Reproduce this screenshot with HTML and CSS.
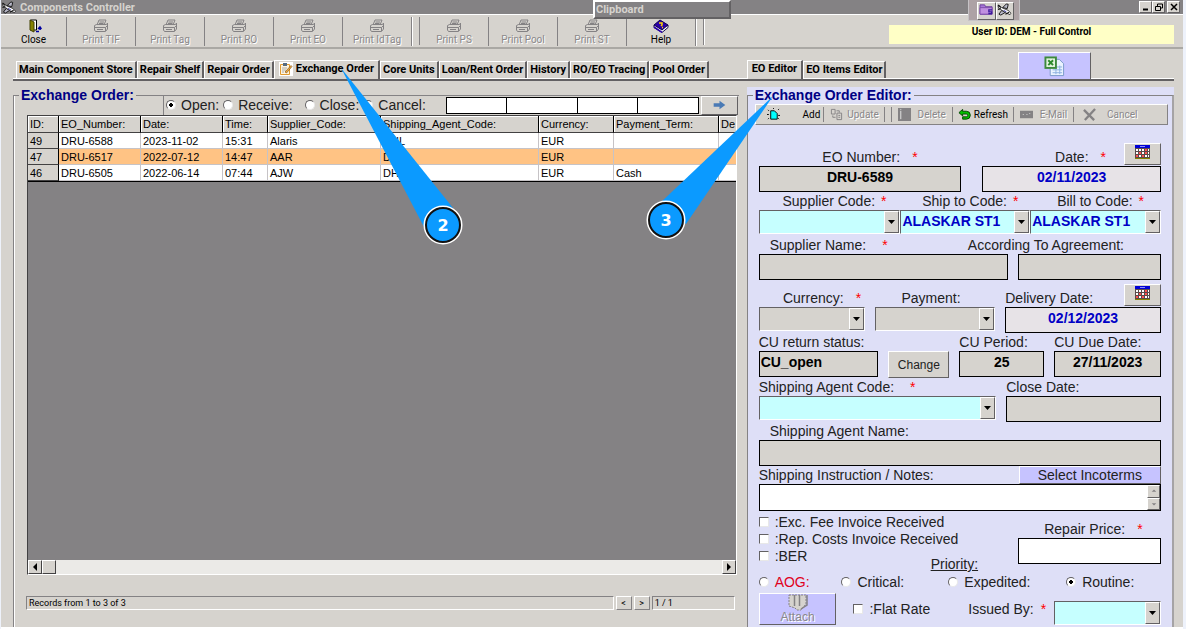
FILE: index.html
```html
<!DOCTYPE html>
<html lang="en">
<head>
  <meta charset="UTF-8" />
  <meta name="viewport" content="width=device-width, initial-scale=1.0"/>
  <title>Components Controller</title>
  <link rel="stylesheet" href="styles.css">
</head>
<body>

<!-- Shared icons -->
<svg class="sprite" aria-hidden="true">
  <symbol id="printer" viewBox="0 0 16 14">
    <path d="M4 6 L6 1 H13 L11 6 M6.500 3 H11 M6 4.500 H10.500 M1.500 6.500 L3.500 5.500 H13.500 L14.500 4 V10 L12.500 12.500 H2.500 L1.500 11 Z M2 8.500 H12.500 L14.500 6.500 M4 10.500 H10 M12.500 8.500 V12" fill="none" stroke="#848284"/>
  </symbol>
  <symbol id="plane" viewBox="0 0 16 14">
    <path d="M6 5 L10 1 L12 1.500 L11 6 Z M5 8 L2 12 L4 13 L9 10 Z" fill="#b8b8c8" stroke="#111"/>
    <path d="M1 3 L3 3 L5 5 L12 8 L15 11 L14 12.500 L10 11 L4 7 L2 6 Z" fill="#fff" stroke="#111" stroke-width=".8"/>
    <path d="M1 2 L4 5 M1 7 L4 6 M9 12 L13 10" fill="none" stroke="#111" stroke-width="1.200"/>
    <path d="M7 8 L10 9.500" stroke="#3030a0"/>
  </symbol>
  <symbol id="calendar" viewBox="0 0 15 15">
    <rect x="0" y="0" width="15" height="3" fill="#0000d6"/>
    <rect x="5" y="1" width="5" height="1" fill="#8a8aff"/>
    <rect x="0" y="3" width="15" height="11" fill="#5a4a4a"/>
    <path d="M1 5 H14 M1 8 H14 M1 11 H14" stroke="#fff" stroke-width="2" stroke-dasharray="2 1"/>
    <path d="M10 5 H12 M4 8 H6 M10 8 H12 M1 11 H3 M7 11 H9" stroke="#ff5050" stroke-width="2"/>
    <rect x="0" y="13" width="15" height="1" fill="#848200"/>
  </symbol>
</svg>

<div class="app">
  <!-- Title bar -->
  <header class="titlebar">
    <svg class="plane"><use href="#plane"/></svg>
    <h1>Components Controller</h1>
    <div class="winbtns">
      <button aria-label="Minimize"><svg viewBox="0 0 8 8"><path d="M1 6.500 H6" stroke="#000" stroke-width="2"/></svg></button>
      <button aria-label="Restore"><svg viewBox="0 0 8 8"><path d="M2.500 3 V1 H7.500 V5 H6 M0.500 3.500 H5.500 V7.500 H0.500 Z" fill="none" stroke="#000"/></svg></button>
      <button class="winclose" aria-label="Close window"><svg viewBox="0 0 8 8"><path d="M1 1 L7 7 M7 1 L1 7" stroke="#000" stroke-width="1.500"/></svg></button>
    </div>
  </header>

  <!-- Main toolbar -->
  <nav class="toolbar">
    <button>
      <svg viewBox="0 0 16 14"><path d="M4.500 1 H10.500 V11 H4.500 Z" fill="#fff" stroke="#000"/><path d="M4 1 L8 3 V13 L4 11 Z" fill="#848200" stroke="#424100"/><path d="M10 12.500 H13 M14 8.500 V11 M12 10 L14 8 L15.500 10" fill="none" stroke="#0000a0" stroke-width="1.500"/></svg>
      Close</button>
    <button disabled><svg><use href="#printer"/></svg>Print TIF</button>
    <button disabled><svg><use href="#printer"/></svg>Print Tag</button>
    <button disabled><svg><use href="#printer"/></svg>Print RO</button>
    <button disabled><svg><use href="#printer"/></svg>Print EO</button>
    <button disabled><svg><use href="#printer"/></svg>Print IdTag</button>
    <span class="divider"></span>
    <button disabled><svg><use href="#printer"/></svg>Print PS</button>
    <button disabled><svg><use href="#printer"/></svg>Print Pool</button>
    <button disabled><svg><use href="#printer"/></svg>Print ST</button>
    <button>
      <svg viewBox="0 0 16 14"><path d="M1 6 L7 1 L15 6 L9 11 Z" fill="#2a00a8" stroke="#100050"/><path d="M1 6 V8.500 L9 13.500 L15 8.500 V6 L9 11 Z" fill="#fff" stroke="#100050"/><path d="M1 8 L9 13.300" stroke="#2a00a8" stroke-width="1.500"/><path d="M6 4 L9 4 L9 6 L8 7 M9 8.500 H10" fill="none" stroke="#ffd800" stroke-width="1.500"/></svg>
      Help</button>
    <span class="divider"></span>
    <p class="user">User ID: DEM - Full Control</p>
  </nav>

  <main class="columns">
    <!-- Order list -->
    <section class="col">
      <div class="tabs">
        <button>Main Component Store</button>
        <button>Repair Shelf</button>
        <button>Repair Order</button>
        <button class="active">
          <svg viewBox="0 0 14 14"><rect width="14" height="14" fill="#fff"/><path d="M1.500 2.500 H10.500 V12.500 H1.500 Z" fill="#fff4dc" stroke="#e09a30"/><rect x="4" y="1" width="4" height="3" fill="#556a80"/><path d="M3 6 H8 M3 8 H7 M3 10 H5" stroke="#aaa"/><path d="M6 10 L12 3.500 L13 4.500 L7.500 11 Z" fill="#f0b040" stroke="#704010" stroke-width=".6"/></svg>
          Exchange Order</button>
        <button>Core Units</button>
        <button>Loan/Rent Order</button>
        <button>History</button>
        <button>RO/EO Tracing</button>
        <button>Pool Order</button>
      </div>

      <fieldset class="group orders">
        <legend>Exchange Order:</legend>

        <div class="filter">
          <label><input type="radio" name="state" checked /> Open:</label>
          <label><input type="radio" name="state" /> Receive:</label>
          <label><input type="radio" name="state" /> Close:</label>
          <label><input type="radio" name="state" /> Cancel:</label>
          <div class="search">
            <input type="text" aria-label="EO number" />
            <input type="text" class="wide" aria-label="Date" />
            <input type="text" aria-label="Supplier" />
            <input type="text" aria-label="Agent" />
          </div>
          <button class="go" aria-label="Search"><svg viewBox="0 0 16 12"><path d="M1 4 H8 V1 L15 6 L8 11 V8 H1 Z" fill="#4a7ab5"/></svg></button>
        </div>

        <div class="grid">
          <div class="rows">
            <table>
              <colgroup>
                <col class="c-id"><col class="c-num"><col class="c-num"><col class="c-time"><col class="c-sup"><col class="c-ship"><col class="c-cur"><col class="c-pay"><col>
              </colgroup>
              <thead>
                <tr><th>ID:</th><th>EO_Number:</th><th>Date:</th><th>Time:</th><th>Supplier_Code:</th><th>Shipping_Agent_Code:</th><th>Currency:</th><th>Payment_Term:</th><th>De</th></tr>
              </thead>
              <tbody>
                <tr><th>49</th><td>DRU-6588</td><td>2023-11-02</td><td>15:31</td><td>Alaris</td><td>DHL</td><td>EUR</td><td></td><td></td></tr>
                <tr class="selected"><th>47</th><td>DRU-6517</td><td>2022-07-12</td><td>14:47</td><td>AAR</td><td>DHL</td><td>EUR</td><td></td><td></td></tr>
                <tr><th>46</th><td>DRU-6505</td><td>2022-06-14</td><td>07:44</td><td>AJW</td><td>DHL</td><td>EUR</td><td>Cash</td><td></td></tr>
              </tbody>
            </table>
          </div>
          <div class="scroll">
            <button aria-label="Scroll left"><svg viewBox="0 0 8 8"><path d="M6 0 V8 L2 4 Z"/></svg></button>
            <span class="thumb"></span>
            <button aria-label="Scroll right"><svg viewBox="0 0 8 8"><path d="M2 0 V8 L6 4 Z"/></svg></button>
          </div>
        </div>

        <div class="pager">
          <span class="records">Records from 1 to 3 of 3</span>
          <button>&lt;</button>
          <button>&gt;</button>
          <span class="page">1 / 1</span>
        </div>
      </fieldset>
    </section>

    <!-- Order editor -->
    <section class="col">
      <div class="tabs">
        <button class="active">EO Editor</button>
        <button>EO Items Editor</button>
        <button class="excel" aria-label="Export to Excel">
          <svg viewBox="0 0 22 22"><path d="M6.500 3.500 H16 L20.500 8 V20.500 H6.500 Z" fill="#eaf3ff" stroke="#7a9ac8"/><path d="M9 11.500 H19 M9 14.500 H19 M9 17.500 H19 M12.500 10 V19 M16.500 10 V19" stroke="#8ab0e0"/><rect x="1.500" y="1.500" width="11" height="11" fill="#e4f4e0" stroke="#3d8a3d" stroke-width="2"/><path d="M4.500 4.500 L9.500 9.500 M9.500 4.500 L4.500 9.500" stroke="#2d8a2d" stroke-width="2"/></svg>
        </button>
      </div>

      <div class="editor">
        <fieldset class="group">
          <legend>Exchange Order Editor:</legend>

          <div class="actions">
            <button><svg viewBox="0 0 14 14"><path d="M4 3 H8 L11 6 V12 H4 Z" fill="#00ffff" stroke="#000"/><path d="M1 2 L2 3 M0 7 H2 M1 12 L2 11 M7 0 V1 M12 2 L13 1 M12 8 H14 M12 11 L13 12" stroke="#000"/></svg><span>Add</span></button>
            <button disabled><svg viewBox="0 0 14 14"><path d="M1.500 1.500 H5.500 V6.500 H1.500 Z M7.500 5.500 H12.500 V12.500 H7.500 Z M7 3 H10 M10 3 V5 M3 8 V10 H6 M9 8 H11 M9 10 H11" fill="none" stroke="#848284"/></svg><span>Update</span></button>
            <i></i>
            <button disabled><svg viewBox="0 0 14 14"><rect width="14" height="14" fill="#848284"/><path d="M3 3 V12 M3 1 V2" stroke="#e8e8e8"/></svg><span>Delete</span></button>
            <button><svg viewBox="0 0 14 14"><path d="M1 5 L5 1.500 V3.500 H9 A4 4 0 0 1 9 12 H5 V9.500 H9 A1.500 1.500 0 0 0 9 6.500 H5 V8.500 Z" fill="#00c000" stroke="#004000"/></svg><span>Refresh</span></button>
            <button disabled><svg viewBox="0 0 14 14"><rect y="3" width="14" height="8" fill="#848284"/><path d="M3 7 H4 M7 7 H8 M10 6 H11" stroke="#ddd"/></svg><span>E-Mail</span></button>
            <button disabled><svg viewBox="0 0 14 14"><path d="M1 2 L12 13 M13 1 L2 13" stroke="#848284" stroke-width="2.500"/></svg><span>Cancel</span></button>
          </div>

          <form class="form">
            <div class="line r-number">
              <div class="cell">
                <label class="mid" for="eoNumber">EO Number: <b>*</b></label>
                <input class="locked center" type="text" id="eoNumber" value="DRU-6589" readonly />
              </div>
              <div class="cell">
                <div class="withcal">
                  <label for="date">Date: <b>*</b></label>
                  <button type="button" class="cal" aria-label="Pick date"><svg><use href="#calendar"/></svg></button>
                </div>
                <input class="date" type="text" id="date" value="02/11/2023" />
              </div>
            </div>

            <div class="line r-codes">
              <div class="cell">
                <label class="mid tight" for="supplier">Supplier Code: <b>*</b></label>
                <div class="combo cyan"><select id="supplier"><option></option></select></div>
              </div>
              <div class="cell">
                <label class="mid tight" for="shipTo">Ship to Code: <b>*</b></label>
                <div class="combo cyan"><select id="shipTo"><option>ALASKAR ST1</option></select></div>
              </div>
              <div class="cell">
                <label class="mid tight" for="billTo">Bill to Code: <b>*</b></label>
                <div class="combo cyan"><select id="billTo"><option>ALASKAR ST1</option></select></div>
              </div>
            </div>

            <div class="line r-name">
              <div class="cell">
                <label class="inset" for="supplierName">Supplier Name: <b>*</b></label>
                <input class="locked" type="text" id="supplierName" readonly />
              </div>
              <div class="cell">
                <label class="end" for="agreement">According To Agreement:</label>
                <input class="locked" type="text" id="agreement" readonly />
              </div>
            </div>

            <div class="line r-money">
              <div class="cell">
                <label class="mid" for="currency">Currency: <b>*</b></label>
                <div class="combo"><select id="currency"><option></option></select></div>
              </div>
              <div class="cell">
                <label class="pay" for="payment">Payment:</label>
                <div class="combo"><select id="payment"><option></option></select></div>
              </div>
              <div class="cell">
                <div class="withcal left">
                  <label for="delivery">Delivery Date:</label>
                  <button type="button" class="cal" aria-label="Pick delivery date"><svg><use href="#calendar"/></svg></button>
                </div>
                <input class="date" type="text" id="delivery" value="02/12/2023" />
              </div>
            </div>

            <div class="line r-return">
              <div class="cell">
                <label for="cuStatus">CU return status:</label>
                <input class="locked" type="text" id="cuStatus" value="CU_open" readonly />
              </div>
              <button type="button" class="change">Change</button>
              <div class="cell">
                <label for="cuPeriod">CU Period:</label>
                <input class="locked center" type="text" id="cuPeriod" value="25" readonly />
              </div>
              <div class="cell">
                <label for="cuDue">CU Due Date:</label>
                <input class="locked center" type="text" id="cuDue" value="27/11/2023" readonly />
              </div>
            </div>

            <div class="line r-agent">
              <div class="cell">
                <label for="agentCode">Shipping Agent Code: <b>*</b></label>
                <div class="combo cyan"><select id="agentCode"><option></option></select></div>
              </div>
              <div class="cell">
                <label for="closeDate">Close Date:</label>
                <input class="locked" type="text" id="closeDate" readonly />
              </div>
            </div>

            <div class="cell">
              <label class="inset" for="agentName">Shipping Agent Name:</label>
              <input class="locked" type="text" id="agentName" readonly />
            </div>

            <div class="cell">
              <div class="notehead">
                <label for="notes">Shipping Instruction / Notes:</label>
                <button type="button" class="lilac">Select Incoterms</button>
              </div>
              <div class="notes">
                <textarea id="notes"></textarea>
                <div class="updown">
                  <button type="button" aria-label="Up"><svg viewBox="0 0 8 8"><path d="M1 5 H7 L4 2 Z"/></svg></button>
                  <button type="button" aria-label="Down"><svg viewBox="0 0 8 8"><path d="M1 3 H7 L4 6 Z"/></svg></button>
                </div>
              </div>
            </div>

            <div class="line r-price">
              <div class="checks">
                <label><input type="checkbox" /> :Exc. Fee Invoice Received</label>
                <label><input type="checkbox" /> :Rep. Costs Invoice Received</label>
                <label><input type="checkbox" /> :BER</label>
              </div>
              <div class="cell">
                <label class="price" for="price">Repair Price: <b>*</b></label>
                <input type="text" id="price" />
              </div>
            </div>

            <div class="priority">
              <span class="caption">Priority:</span>
              <div class="options">
                <label class="aog"><input type="radio" name="priority" /> AOG:</label>
                <label><input type="radio" name="priority" /> Critical:</label>
                <label><input type="radio" name="priority" /> Expedited:</label>
                <label><input type="radio" name="priority" checked /> Routine:</label>
              </div>
            </div>

            <div class="bottom">
              <button type="button" class="lilac attach" disabled>
                <svg viewBox="0 0 22 17"><path d="M2 1 H19 V10 L14 16 H10 L8 14 L2 12 Z" fill="#d6d3ce" stroke="#848284" stroke-dasharray="2 1"/><path d="M7.500 1 V12 M12.500 1 V12 M20 1 V11 L14 15" fill="none" stroke="#848284" stroke-width="1.500"/></svg>
                Attach</button>
              <label class="flat"><input type="checkbox" /> :Flat Rate</label>
              <label class="issued" for="issuedBy">Issued By: <b>*</b></label>
              <div class="combo cyan"><select id="issuedBy"><option></option></select></div>
            </div>
          </form>
        </fieldset>
      </div>
    </section>
  </main>

  <!-- Floating bars over the title bar -->
  <div class="clipboard">Clipboard</div>
  <div class="tray">
    <button aria-label="Folder"><svg viewBox="0 0 16 14"><path d="M1 2 H6 L7 4 H14 V12 H1 Z" fill="#a878d8" stroke="#6a3a9a"/><path d="M1 5 H14 V12 H1 Z" fill="#c090e0" stroke="#7a4aaa"/><path d="M14 7.500 H10.500 V9.500 H13.500 V11.500 H10" fill="none" stroke="#3a1a9a" stroke-width="1.300"/></svg></button>
    <button aria-label="Plane"><svg><use href="#plane"/></svg></button>
  </div>

  <!-- Step callouts -->
  <svg class="callouts" viewBox="0 0 800 260">
    <polygon points="341,68 424,227 453,208"/>
    <polygon points="773,96 658,205 686,224"/>
    <g class="pin"><circle class="halo" cx="443" cy="225" r="18"/><circle cx="443" cy="225" r="17"/><text x="443" y="231">2</text></g>
    <g class="pin"><circle class="halo" cx="666" cy="220" r="18"/><circle cx="666" cy="220" r="17"/><text x="666" y="226">3</text></g>
  </svg>
</div>

</body>
</html>
```

FILE: styles.css
```css
* {
  box-sizing: border-box;
}
body {
  margin: 0;
  background: #eef2fb;
  font-family: "Liberation Sans", Arial, sans-serif;
  font-size: 14px;
  color: #222;
}
h1, p {
  margin: 0;
}
button, input, select, textarea {
  font: inherit;
  color: inherit;
  margin: 0;
  padding: 0;
  border-radius: 0;
}
button {
  background: #d6d3ce;
  border: 1px solid;
  border-color: #fff #636163 #636163 #fff;
}
.sprite {
  display: none;
}
.app {
  position: relative;
  display: flex;
  flex-direction: column;
  height: 100vh;
  margin: 0 3px 0 1px;
  background: #d6d3ce;
  border-bottom: 2px solid #fff;
  overflow: hidden;
}

/* title bar */
.titlebar {
  display: flex;
  align-items: center;
  flex: none;
  height: 15px;
  padding-right: 3px;
  background: #848284;
  border-bottom: 1px solid #fff;
}
.titlebar h1 {
  flex: 1;
  font: bold 11px Roboto, sans-serif;
  color: #d6d3ce;
}
.plane {
  width: 16px;
  height: 13px;
  margin-right: 3px;
}
.winbtns {
  display: flex;
}
.winbtns button {
  display: flex;
  align-items: center;
  justify-content: center;
  width: 13px;
  height: 12px;
}
.winbtns svg {
  width: 8px;
  height: 8px;
}
.winbtns .winclose {
  margin-left: 2px;
}

/* main toolbar */
.toolbar {
  display: flex;
  flex: none;
  height: 34px;
  padding: 2px 9px 2px 0;
  border-bottom: 2px solid #aaa8a4;
}
.toolbar button {
  display: flex;
  flex-direction: column;
  align-items: center;
  width: 69px;
  height: 29px;
  padding-top: 2px;
  border: 0;
  border-right: 1px solid #848284;
  box-shadow: 1px 0 #fff;
  font: 10px/13px Roboto, sans-serif;
  color: #000;
}
.toolbar button:first-child {
  width: 66px;
}
.toolbar svg {
  width: 16px;
  height: 14px;
}
.toolbar button:disabled, button:disabled {
  color: #8a888a;
  text-shadow: 1px 1px #fff;
}
.divider {
  width: 8px;
  border-right: 1px solid #848284;
  box-shadow: 1px 0 #fff;
}
.toolbar .user {
  width: 285px;
  height: 19px;
  margin: 8px 0 0 auto;
  background: #ffffc6;
  font: bold 10px/13px Roboto, sans-serif;
  color: #000;
  text-align: center;
}

/* columns and tabs */
.columns {
  display: grid;
  grid-template-columns: minmax(0, 733fr) minmax(0, 427fr);
  flex: 1;
  min-height: 0;
  padding: 3px 9px 0 12px;
}
.col {
  display: flex;
  flex-direction: column;
  min-height: 0;
}
.tabs {
  display: flex;
  align-items: flex-end;
  flex: none;
  height: 29px;
  padding-left: 3px;
  border-bottom: 2px solid #636163;
  box-shadow: inset 0 -1px #fff;
}
.tabs button {
  display: flex;
  align-items: center;
  justify-content: center;
  height: 17px;
  margin-bottom: 1px;
  padding: 0 2px;
  border-bottom: 0;
  border-right-width: 2px;
  font: bold 11px/14px Roboto, sans-serif;
  color: #000;
  white-space: nowrap;
}
.tabs .active {
  height: 19px;
  margin-bottom: 0;
  padding: 0 4px 2px;
}
.tabs .active svg {
  width: 14px;
  height: 14px;
  margin-right: 3px;
}
.editor {
  flex: 1;
  min-height: 0;
  margin-top: 6px;
  background: #dedff7;
}
.col:last-child .tabs {
  padding-left: 0;
}
.tabs .excel {
  width: 73px;
  height: 27px;
  margin: 0 83px 0 auto;
  background: #c6c3ff;
  border-right-width: 1px;
}
.excel svg {
  width: 21px;
  height: 21px;
}

/* group boxes */
.group {
  min-width: 0;
  margin: 0;
  padding: 0;
  border: 1px solid #848284;
  border-bottom: 0;
}
.group legend {
  margin-left: 5px;
  padding: 0 2px;
  font-weight: bold;
  font-size: 14px;
  line-height: 16px;
  color: #000084;
}
.orders {
  display: flex;
  flex-direction: column;
  flex: 1;
  min-height: 0;
  margin: 6px 8px 0 0;
  border-right: 0;
  box-shadow: inset 1px 0 #fff;
}
.editor .group {
  height: 100%;
  border-right: 2px solid #a5a3a5;
}

/* filter */
.filter {
  display: flex;
  align-items: center;
  height: 20px;
  margin: -8px 1px 0 149px;
  padding-left: 2px;
  border-left: 1px solid #848284;
}
.filter label {
  display: flex;
  align-items: center;
  margin-right: 4px;
}
.filter label:nth-child(2) {
  margin-right: 12px;
}
input[type="radio"], input[type="checkbox"] {
  appearance: none;
  flex: none;
  width: 10px;
  height: 10px;
  background: #fff;
  border: 1px solid;
  border-color: #636163 #e8e8e8 #e8e8e8 #636163;
}
input[type="radio"] {
  margin-right: 6px;
  border-radius: 50%;
}
.filter input[type="radio"] {
  margin-right: 5px;
}
input[type="radio"]:checked {
  background: radial-gradient(circle, #000 2px, #fff 2px);
}
input[type="checkbox"] {
  margin-right: 6px;
}
.search {
  display: flex;
  flex: 1;
  min-width: 0;
  height: 17px;
  margin-left: 16px;
}
.search input {
  flex: 6;
  min-width: 0;
  width: 0;
  border: 1px solid #000;
  border-width: 1px 1px 1px 0;
}
.search input:first-child {
  border-left-width: 1px;
}
.search .wide {
  flex: 7;
}
.go {
  width: 37px;
  height: 19px;
  margin-left: 2px;
}
.go svg {
  width: 15px;
  height: 10px;
}

/* order table */
.grid {
  display: flex;
  flex-direction: column;
  flex: 1;
  min-height: 0;
  margin: 0 2px 0 13px;
  background: #848284;
  border: 1px solid;
  border-color: #424142 #fff #fff #424142;
}
.rows {
  flex: 1;
}
table {
  width: 100%;
  table-layout: fixed;
  border-collapse: separate;
  border-spacing: 0;
  border-bottom: 1px solid #000;
  background: #fff;
  font-size: 11px;
  line-height: 14px;
  color: #000;
}
th, td {
  height: 16px;
  padding: 0 2px;
  border-right: 1px solid #c6c3c6;
  border-bottom: 1px solid #c6c3c6;
  font-weight: normal;
  text-align: left;
  white-space: nowrap;
}
th {
  background: #d6d3ce;
  border-right-color: #000;
  border-bottom-color: #424142;
}
thead th {
  height: 17px;
  box-shadow: inset 1px 1px #fff;
}
th:last-child, td:last-child {
  padding-right: 0;
  border-right: 0;
}
.selected td {
  background: #ffc384;
}
.c-id { width: 31px; }
.c-num { width: 82px; }
.c-time { width: 45px; }
.c-sup { width: 113px; }
.c-ship { width: 158px; }
.c-cur { width: 75px; }
.c-pay { width: 105px; }

.scroll {
  display: flex;
  flex: none;
  height: 14px;
  background: #ebeae7;
}
.scroll button, .thumb {
  width: 14px;
  background: #d6d3ce;
  border: 1px solid;
  border-color: #fff #424142 #424142 #fff;
}
.scroll button {
  display: flex;
  align-items: center;
  justify-content: center;
}
.scroll svg {
  width: 8px;
  height: 8px;
}
.scroll button:last-child {
  margin-left: auto;
}

/* pager */
.pager {
  display: flex;
  gap: 2px;
  height: 14px;
  margin: 21px 4px 17px 12px;
  font: 9px/12px Roboto, sans-serif;
  color: #000;
}
.records, .page {
  padding-left: 2px;
  border: 1px solid;
  border-color: #848284 #fff #fff #848284;
}
.records {
  flex: 1;
}
.page {
  width: 83px;
}
.pager button {
  width: 16px;
  line-height: 10px;
  border-color: #fff #848284 #848284 #fff;
}

/* editor toolbar */
.actions {
  display: flex;
  align-items: center;
  height: 21px;
  margin: 1px 4px 0 7px;
  padding-left: 8px;
  background: #d6d3ce;
  border: 1px solid;
  border-color: #fff #848284 #848284 #fff;
}
.actions button {
  display: flex;
  align-items: center;
  justify-content: space-around;
  flex: 64;
  height: 15px;
  padding: 0 3px;
  border: 0;
  border-right: 1px solid #848284;
  font: 10px Roboto, sans-serif;
}
.actions button:first-child {
  justify-content: space-between;
}
.actions button:last-child {
  flex: 78;
  padding-right: 24px;
  border: 0;
}
.actions button:enabled {
  color: #000;
}
.actions svg {
  width: 13px;
  height: 13px;
}
.actions i {
  width: 7px;
  height: 15px;
  border-right: 1px solid #848284;
}

/* editor form */
.form {
  display: flex;
  flex-direction: column;
  margin: 23px 11px 0;
}
.line {
  display: grid;
  gap: 10px;
}
.cell {
  display: flex;
  flex-direction: column;
  min-width: 0;
}
.form label {
  display: flex;
  align-items: center;
  height: 18px;
  white-space: nowrap;
}
.form label b {
  margin-left: 16px;
  font-weight: normal;
  color: #f00;
}
.form .mid {
  justify-content: center;
  padding-left: 20px;
}
.form .mid b {
  margin-left: 12px;
}
.form .tight {
  padding-left: 10px;
}
.form .tight b {
  margin-left: 6px;
}
.form .inset {
  padding-left: 11px;
}
.form .pay {
  padding-left: 26px;
}
.form .end {
  justify-content: flex-end;
  padding-right: 37px;
}
.form input[type="text"] {
  width: 100%;
  height: 26px;
  padding: 0 1px 4px;
  border: 1px solid #000;
  font-weight: bold;
}
.form .locked {
  background: #d6d3ce;
  color: #000;
}
.center, .date {
  text-align: center;
}
.form .date {
  background: #e7e3e7;
  color: #0000c6;
}
.combo {
  display: flex;
  height: 24px;
  background: #d6d3ce;
  border: 1px solid;
  border-color: #636163 #fff #fff #636163;
}
.cyan {
  background: #c6ffff;
}
.combo select {
  appearance: none;
  flex: 1;
  min-width: 0;
  padding: 0 0 3px 1px;
  background: none;
  border: 0;
  font-weight: bold;
  color: #0000c6;
}
.combo::after {
  content: "";
  width: 13px;
  border: 1px solid;
  border-color: #fff #636163 #636163 #fff;
  background: #d6d3ce url("data:image/svg+xml,%3Csvg xmlns='http://www.w3.org/2000/svg' width='7' height='4'%3E%3Cpath d='M0 0H7L3.5 4Z'/%3E%3C/svg%3E") center no-repeat;
}
.withcal {
  display: flex;
  justify-content: flex-end;
  gap: 18px;
  height: 18px;
}
.withcal.left {
  justify-content: space-between;
}
.withcal label b {
  margin-left: 12px;
}
.cal {
  width: 37px;
  height: 22px;
  margin-top: -5px;
}
.cal svg {
  width: 15px;
  height: 15px;
}
.r-number {
  grid-template-columns: 203fr 179fr;
  gap: 21px;
}
.r-codes {
  grid-template-columns: 142fr 130fr 131fr;
  gap: 0;
}
.r-name {
  grid-template-columns: 250fr 143fr;
  margin-top: 2px;
}
.r-money {
  grid-template-columns: 107fr 120fr 156fr;
  margin-top: 9px;
}
.r-return {
  grid-template-columns: 120fr 61fr 85fr 107fr;
}
.r-agent {
  grid-template-columns: 238fr 155fr;
}
.change {
  height: 27px;
  margin-top: 18px;
  font-size: 12px;
}
.notehead {
  display: grid;
  grid-template-columns: 261fr 143fr;
  height: 18px;
}
.lilac {
  background: #c6c3ff;
}
.notes {
  display: flex;
  height: 27px;
  background: #fff;
  border: 1px solid #000;
}
.notes textarea {
  flex: 1;
  border: 0;
  resize: none;
}
.updown {
  display: flex;
  flex-direction: column;
  width: 13px;
}
.updown button {
  display: flex;
  align-items: center;
  justify-content: center;
  flex: 1;
  min-height: 0;
}
.updown svg {
  width: 6px;
  height: 6px;
  fill: #848284;
}
.r-price {
  grid-template-columns: 250fr 143fr;
}
.r-price .cell {
  padding-top: 9px;
}
.form .price {
  padding-left: 26px;
}
.form .price b {
  margin-left: 12px;
}
.checks label {
  height: 17px;
}
.checks {
  padding-top: 2px;
}
.priority {
  display: flex;
  flex-direction: column;
}
.caption {
  margin: -8px 0 0 172px;
  line-height: 17px;
  text-decoration: underline;
}
.options {
  display: grid;
  grid-template-columns: 83fr 107fr 118fr 95fr;
}
.bottom {
  display: grid;
  grid-template-columns: 78fr 101fr 93fr 107fr;
  gap: 8px;
  margin-top: 2px;
  align-items: end;
}
.form .aog {
  color: #e00020;
}
.attach {
  display: flex;
  flex-direction: column;
  align-items: center;
  height: 32px;
  font-size: 12px;
  line-height: 12px;
  text-shadow: none;
}
.attach svg {
  width: 22px;
  height: 17px;
}
.bottom label {
  align-self: center;
}
.form .flat {
  padding-left: 9px;
}
.form .issued {
  justify-content: flex-end;
}
.form .issued b {
  margin-left: 7px;
}

/* floating bars */
.clipboard {
  position: absolute;
  left: 592px;
  top: 0;
  width: 138px;
  height: 19px;
  background: #848284;
  border: 2px solid;
  border-color: #fff #636163 #636163 #fff;
  font: bold 11px/15px Roboto, sans-serif;
  padding-left: 1px;
  color: #d6d3ce;
}
.tray {
  position: absolute;
  right: 163px;
  top: 0;
  display: flex;
  width: 52px;
  height: 21px;
  padding: 2px 5px 0 8px;
  background: #ada2a5;
  border: 1px solid #c6c3c6;
  border-top: 0;
}
.tray button {
  width: 20px;
  height: 18px;
}
.tray svg {
  width: 15px;
  height: 13px;
}

/* callouts */
.callouts {
  position: absolute;
  left: -1px;
  top: 0;
  width: 800px;
  height: 260px;
  fill: #0b9aff;
  pointer-events: none;
}
.pin circle {
  stroke: #111;
  stroke-width: 2;
}
.pin .halo {
  stroke: #fff;
  stroke-width: 3;
}
.pin text {
  fill: #fff;
  font: bold 16px "DejaVu Sans", sans-serif;
  text-anchor: middle;
}
```
